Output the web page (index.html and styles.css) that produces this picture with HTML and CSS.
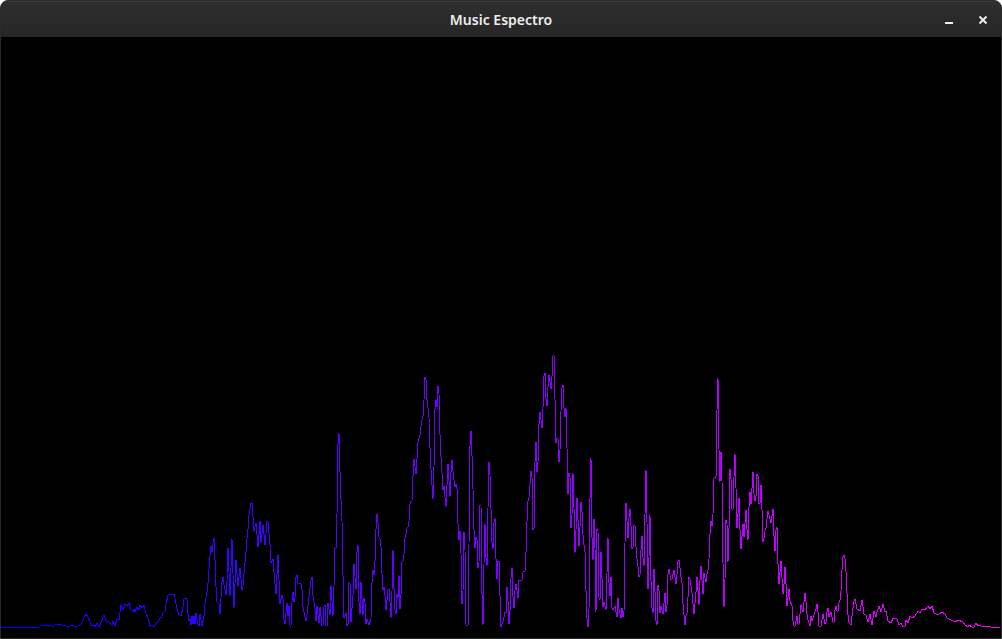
FILE: index.html
```html
<!DOCTYPE html>
<html lang="en">
<head>
<meta charset="utf-8">
<title>Music Espectro</title>
<link rel="stylesheet" href="styles.css">
</head>
<body>
<div class="window">
  <header class="titlebar">
    <h1 class="title">Music Espectro</h1>
    <div class="controls">
      <button class="control" type="button" aria-label="Minimize">
        <svg class="icon" viewBox="0 0 10 10" aria-hidden="true"><path d="M1 7h8v2H1z"/></svg>
      </button>
      <button class="control" type="button" aria-label="Close">
        <svg class="icon" viewBox="0 0 10 10" aria-hidden="true"><path class="cross" d="M1.500 1.500L8.500 8.500M8.500 1.500L1.500 8.500"/></svg>
      </button>
    </div>
  </header>
  <main class="stage">
    <svg class="spectrum" viewBox="1 37 1000 601" preserveAspectRatio="none" role="img" aria-label="Audio spectrum">
      <defs>
        <linearGradient id="hue" gradientUnits="userSpaceOnUse" x1="1" y1="0" x2="1001" y2="0">
          <stop offset="0" stop-color="#0000ff"/>
          <stop offset="1" stop-color="#ff00ff"/>
        </linearGradient>
      </defs>
      <polyline class="trace" points="
1,627 39,627 40,626 43,625 49,625 51,626 54,626 56,624 60,624 62,625 66,626 68,627 70,626 73,625 74,627 77,626 80,625 82,623 84,617 86,614 88,617 90,622 91,626 94,625 95,627 97,623 99,627 101,622 104,615 106,621 109,622 112,625 113,621 115,626 117,619 119,620 121,605 123,610 125,604 127,606 129,603 131,610 133,612 134,609 135,612 137,607 139,610 140,605 142,608 144,605 146,613 148,618 150,626 152,625 154,627 156,623 158,622 160,618 162,617 163,613 165,611 166,604 168,595
169,594 171,595 174,594 176,604 177,609 179,615 181,616 183,607 184,599 186,598 187,600 188,614 189,621 190,619 191,625 192,616 193,624 194,616 195,624 196,613 198,624 199,626 200,614 202,626 204,616 205,604 207,592 208,583 210,555 211,546 212,552 213,543 214,538 215,560 216,587 217,602 219,604 220,614 222,582 223,577 224,585 226,595 227,580 228,548 230,596 232,539 234,608 236,560 238,586 240,568 242,590 243,586 244,573 246,551 247,538 248,529 249,515 251,503 252,503 254,531 256,523 258,547 260,521 261,542 263,525 265,545 267,521 268,522 270,545
271,563 273,559 275,584 276,594 278,555 280,604 282,595 283,599 284,620 285,624 287,603 288,616 289,606 290,626 291,626 292,601 293,592 294,602 295,597 296,577 297,575 298,583 301,584 302,590 303,607 304,612 306,621 307,615 309,596 311,580 312,577 313,596 315,608 316,621 317,606 319,623 320,607 322,626 323,625 324,607 325,605 326,626 327,627 328,603 330,615 331,586 333,616 334,586 335,548 336,549 337,514 338,444 339,433 340,472 341,500 342,521 343,575 344,618 346,613 347,626 348,625 349,583 350,584 351,622 353,595 354,564 356,590 357,552 358,545 359,602 360,614 361,582 363,615 364,598 365,603 366,624 367,619 369,625 371,618 372,583 373,570 374,575 375,561 376,529 377,514 378,523 379,537 380,539 381,547 382,574 383,590 384,587 385,596 386,610 388,590 389,589 390,602 391,618
392,591 393,550 394,588 395,610 396,614 397,594 398,598 399,575 400,609 401,594 402,562 403,561 404,554 405,538 406,534 407,528 408,527 409,521 410,504 411,501 412,501 413,476 414,459 416,474 417,458 418,442 419,438 420,435 421,426 422,420 423,416 424,400 425,377 426,380 427,400 428,408 429,418 430,448 431,469 432,485 433,499 434,466 435,409 436,400 437,407 438,386 439,394 440,435 441,457 442,473 443,490 444,486 446,507 448,464 450,497 451,472 452,460 453,471 454,480 455,487 456,484 457,489 458,524 459,540 460,531
461,554 462,604 463,591 464,532 465,550 466,625 468,626 469,545 470,445 471,431 472,456 473,489 474,530 475,548 476,537 477,540 478,568 479,562 480,505 481,506 482,595 483,625 484,564 485,524 486,558 487,566 488,508 489,462 490,475 491,510 492,542 493,549 494,522 495,518 496,559 497,579 498,561 499,561 500,596 501,627 502,624 503,622 505,612 506,613 507,587 508,601 509,624 510,610 511,578 512,568 513,597 514,608 515,590 516,584 518,598 519,580 522,580 523,572 525,571 526,552 527,521 528,501
529,497 531,471 532,477 533,529 534,529 535,462 536,442 537,472 538,462 539,424 540,412 542,428 543,407 544,376 545,373 546,399 547,406 548,387 549,375 551,389 552,376 553,356 554,355 555,399 556,443 557,438 558,439 559,462 560,450 561,411 562,388 563,385 564,408 565,417 566,408 567,448 568,494 569,473 570,477 571,528 572,515 573,473 574,508 575,553 576,530 577,498 578,520 579,546 580,527 581,502 582,512 583,535 584,545 585,552 586,591 587,619 588,627
589,610 590,498 591,458 592,538 593,560 594,519 595,548 596,612 597,529 598,531 599,598 600,600 601,552 602,579 603,607 604,602 606,610 607,573 608,538 609,583 610,596 611,577 612,608 613,610 615,606 617,617 618,598 619,609 621,618 622,608 623,617 624,612 625,543 626,503 628,538 629,518 630,509 631,526 632,549 633,547 634,525 635,526 636,547 637,559 638,567 639,577 640,575 641,550 642,536 643,558 644,566 645,514 646,470 647,522 648,589 649,557 650,515 651,581 652,608 653,613 654,569 655,592 656,621 657,625 658,585
659,591 660,613 661,606 663,614 665,593 666,612 667,605 668,574 669,569 671,580 672,579 674,570 676,584 677,574 678,561 679,560 680,568 681,577 682,583 683,604 685,625 686,616 687,613 688,597 689,577 690,579 692,593 694,614 696,592 697,577 699,605 700,580 701,566 703,594 704,573 706,582 707,574 708,570 709,559 710,534 711,521 712,526 713,514 714,478 716,477 717,410 718,378 719,449 720,482 721,452 722,481 723,563 724,607 725,579 726,520 727,524 728,562 729,528 730,469 731,479 732,509 733,509 734,477 735,454 736,488 737,528
738,513 739,498 740,530 741,549 743,524 744,537 746,510 747,529 748,540 749,507 750,492 751,504 753,472 754,494 755,501 756,496 757,474 758,476 759,504 760,503 761,485 762,510 763,542 764,538 765,531 766,528 768,511 769,515 771,523 773,509 774,536 775,551 776,530 777,527 778,564 779,584 781,561 782,578 783,594 784,584 785,567 786,584 787,606 789,589 790,601 792,606 793,621 794,626 795,626 797,616 798,624 799,624 800,614 801,605 803,612 804,602 805,593 806,602 807,614 808,620 810,626 811,616 812,621 814,615 816,609
817,604 818,612 819,626 821,626 823,614 825,624 826,622 827,612 828,608 829,617 831,612 833,622 834,622 835,610 836,606 837,611 838,611 839,603 840,600 841,591 842,570 843,557 844,555 845,559 846,572 847,593 848,615 849,623 851,625 852,616 853,608 854,601 855,599 857,609 860,611 862,600 864,614 866,615 868,622 870,614 872,625 874,611 876,617 877,612 879,606 881,612 883,604 885,612 886,611 888,621 891,623 893,618 897,619 899,625 901,623 903,627 905,626 906,620 908,623 910,616 912,618 915,616 918,611 920,613 922,609 925,610 928,606 930,609 932,606 934,613 938,615 942,612 945,614 947,618 951,620 955,622 958,620 963,622 965,625 968,627 969,625 972,627 974,627 976,623 978,626 980,625 982,627 984,626 987,627 989,626 991,627 1000,627"/>
    </svg>
  </main>
</div>
</body>
</html>
```
FILE: styles.css
```css
* {
  box-sizing: border-box;
}

body {
  margin: 0;
  background: #fff;
  font-family: "Noto Sans", sans-serif;
}

.window {
  display: flex;
  flex-direction: column;
  height: 100vh;
  overflow: hidden;
  border: 1px solid #2b2b2b;
  border-radius: 8px 8px 0 0;
  background: #000;
}

.titlebar {
  display: grid;
  grid-template-columns: 1fr auto 1fr;
  align-items: center;
  height: 36px;
  padding: 1px 8px 0;
  background: linear-gradient(#2e2e2e, #262626);
  box-shadow: inset 0 1px #3b3b3b;
}

.title {
  grid-column: 2;
  margin: 0;
  color: #eeeeec;
  font-size: 14px;
  font-weight: 600;
  line-height: 20px;
}

.controls {
  display: flex;
  justify-content: flex-end;
  gap: 14px;
}

.control {
  width: 20px;
  height: 20px;
  padding: 5px;
  border: 0;
  background: none;
}

.icon {
  display: block;
  width: 10px;
  height: 10px;
  fill: #eeeeec;
}

.cross {
  fill: none;
  stroke: #eeeeec;
  stroke-width: 2;
}

.stage {
  flex: 1;
  min-height: 0;
}

.spectrum {
  display: block;
  width: 100%;
  height: 100%;
}

.trace {
  fill: none;
  stroke: url(#hue);
  stroke-width: 1;
  shape-rendering: crispEdges;
}
```
